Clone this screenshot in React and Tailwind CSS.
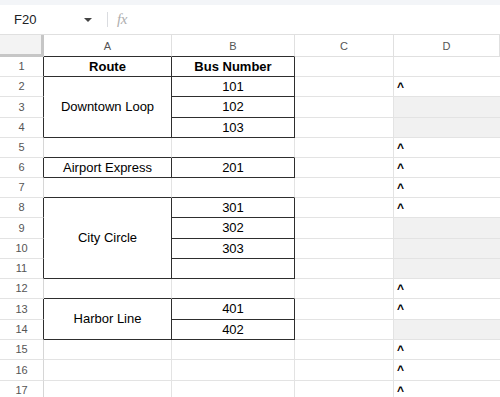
import React from 'react';

// rows that carry the black table outline
const tableRows = [1, 2, 3, 4, 6, 8, 9, 10, 11, 13, 14];
const grayRows = [3, 4, 9, 10, 11, 14];

// merged route cells in column A
const routes = {
  1: { text: 'Route', span: 1, bold: true },
  2: { text: 'Downtown Loop', span: 3 },
  5: { text: '', span: 1 },
  6: { text: 'Airport Express', span: 1 },
  7: { text: '', span: 1 },
  8: { text: 'City Circle', span: 4 },
  12: { text: '', span: 1 },
  13: { text: 'Harbor Line', span: 2 },
  15: { text: '', span: 1 },
  16: { text: '', span: 1 },
  17: { text: '', span: 1 },
};

const buses = {
  1: 'Bus Number', 2: '101', 3: '102', 4: '103', 6: '201',
  8: '301', 9: '302', 10: '303', 13: '401', 14: '402',
};

const spanClass = {
  1: 'row-span-1',
  2: 'row-span-2',
  3: 'row-span-3',
  4: 'row-span-4',
};

function FormulaBar() {
  return (
    <div className="h-[35px] flex flex-col border-b border-[#e0e0e0]">
      <div className="h-[5px] bg-[#f3f5f8]" />
      <div className="flex-1 flex items-center bg-white">
        <div className="w-[80px] pl-[14px] text-[13px] text-[#202124]">F20</div>
        <svg width="10" height="6" viewBox="0 0 10 6" className="ml-[3px]">
          <path d="M1 1 L9 1 L5 5 Z" fill="#444" />
        </svg>
        <div className="ml-[14px] w-px h-[15px] bg-[#dadce0]" />
        <div className="ml-[9px] text-[15px] italic text-[#aeaeae] font-['Liberation_Serif',serif] tracking-tight">fx</div>
      </div>
    </div>
  );
}

function App() {
  const rows = Array.from({ length: 17 }, (_, i) => i + 1);
  const cells = [];

  // header row
  cells.push(
    <div key="corner" className="bg-[#f3f3f3] border-r-[3px] border-b-[3px] border-[#c6c6c6]" />
  );
  ['A', 'B', 'C', 'D'].map((l, i) => {
    const dark = i < 2;
    cells.push(
      <div
        key={'h' + l}
        className={
          'flex items-center justify-center pt-[2px] text-[11px] text-[#555] bg-white border-r border-b ' +
          (dark ? 'border-r-[#e0e0e0] border-b-[#2e2e2e]' : 'border-[#e0e0e0]')
        }
      >
        {l}
      </div>
    );
  });

  rows.forEach((n) => {
    const inTable = tableRows.includes(n);
    cells.push(
      <div
        key={'r' + n}
        className={
          'flex items-center justify-center text-[11px] text-[#555] bg-white border-r border-b border-b-[#e3e3e3] ' +
          (inTable ? 'border-r-[#2e2e2e]' : 'border-r-[#d6d6d6]')
        }
      >
        {n}
      </div>
    );

    const route = routes[n];
    if (route) {
      const last = n + route.span - 1;
      const tbl = tableRows.includes(n);
      cells.push(
        <div
          key={'a' + n}
          className={
            spanClass[route.span] +
            ' flex items-center justify-center text-[13px] text-black border-r border-b ' +
            (route.bold ? 'font-bold ' : '') +
            (tbl ? 'border-r-[#2e2e2e] ' : 'border-r-[#e3e3e3] ') +
            (last <= 14 ? 'border-b-[#2e2e2e]' : 'border-b-[#e3e3e3]')
          }
        >
          {route.text}
        </div>
      );
    }

    cells.push(
      <div
        key={'b' + n}
        className={
          'flex items-center justify-center text-[13px] text-black border-r border-b ' +
          (n === 1 ? 'font-bold ' : '') +
          (inTable ? 'border-r-[#2e2e2e] ' : 'border-r-[#e3e3e3] ') +
          (n <= 14 ? 'border-b-[#2e2e2e]' : 'border-b-[#e3e3e3]')
        }
      >
        {buses[n] || ''}
      </div>
    );

    cells.push(<div key={'c' + n} className="border-r border-b border-[#e3e3e3]" />);

    const gray = grayRows.includes(n);
    cells.push(
      <div
        key={'d' + n}
        className={
          'flex items-center pl-[3px] border-b border-[#e3e3e3] ' + (gray ? 'bg-[#f1f1f1]' : 'bg-white')
        }
      >
        {n !== 1 && !gray ? <span className="text-[12px] font-bold text-black leading-none">^</span> : null}
      </div>
    );
  });

  return (
    <div className="w-[500px] h-[397px] overflow-hidden bg-white font-['Liberation_Sans',Arial,sans-serif]">
      <FormulaBar />
      <div className="grid grid-cols-[44px_128px_123px_99px_106px] grid-rows-[22px_20px_20px_21px_20px_20px_20px_20px_20px_21px_20px_20px_20px_21px_20px_20px_21px_20px]">
        {cells}
      </div>
    </div>
  );
}

export default App;
